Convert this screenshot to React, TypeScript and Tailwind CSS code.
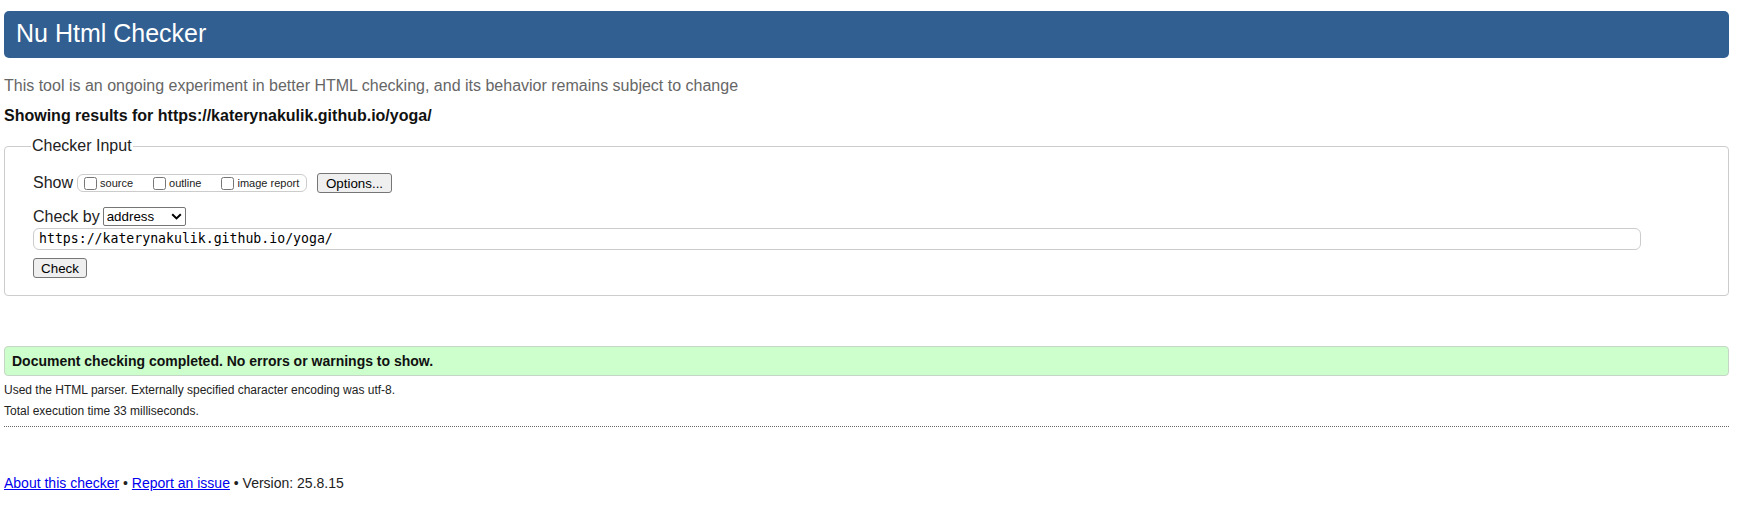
import React from 'react';

const Chevron: React.FC = () => (
  <svg width="11" height="7" viewBox="0 0 11 7" className="absolute right-[4px] top-[6px] pointer-events-none">
    <path d="M1.2 1.2 L5.5 5.4 L9.8 1.2" fill="none" stroke="#000" strokeWidth="2" />
  </svg>
);

const Box: React.FC<{ label: string }> = ({ label }) => (
  <label className="flex items-center whitespace-nowrap text-[11px] leading-[14px] text-[#222]">
    <input type="checkbox" className="w-[13px] h-[13px] m-0 mr-[3px]" />
    <span>{label}</span>
  </label>
);

const App: React.FC = () => {
  return (
    <div className="min-h-[519px] bg-white text-[#222] font-['Liberation_Sans',Arial,sans-serif]">
      <div className="ml-[4px] w-[1725px] pt-[11px]">
        {/* Title bar */}
        <h1 className="h-[47px] flex items-center pl-[12px] pb-[3px] rounded-[5px] bg-[#315f91] text-white text-[25px] leading-[30px] font-normal">
          Nu Html Checker
        </h1>

        <p className="mt-[18px] text-[16px] leading-[20px] text-[#666]">
          This tool is an ongoing experiment in better HTML checking, and its behavior remains subject to change
        </p>
        <p className="mt-[10px] text-[16px] leading-[20px] font-bold text-[#111]">
          Showing results for https://katerynakulik.github.io/yoga/
        </p>

        {/* Checker input */}
        <div className="relative mt-[20px] h-[150px] border border-[#cccccc] rounded-[4px] pl-[28px] pt-[26px]">
          <div className="absolute left-[26px] top-[-10px] bg-white px-[1px] text-[16px] leading-[18px] text-[#222]">
            Checker Input
          </div>

          <div className="flex items-center h-[20px]">
            <span className="text-[16px] mr-[4px]">Show</span>
            <div className="flex items-center h-[18px] w-[230px] border border-[#cccccc] rounded-[6px] pl-[6px]">
              <Box label="source" />
              <div className="w-[20px]" />
              <Box label="outline" />
              <div className="w-[20px]" />
              <Box label="image report" />
            </div>
            <button className="ml-[10px] h-[20px] w-[75px] text-[13.33px] bg-[#efefef] border border-[#767676] rounded-[3px] text-black">
              Options...
            </button>
          </div>

          <div className="flex items-center mt-[14px] h-[19px]">
            <span className="text-[16px] mr-[3px]">Check by</span>
            <div className="relative">
              <select className="appearance-none block h-[19px] w-[83px] border border-[#767676] rounded-[2px] pl-[3px] text-[13.33px] leading-[17px] text-black bg-white">
                <option>address</option>
              </select>
              <Chevron />
            </div>
          </div>

          <div className="mt-[2px] h-[22px] w-[1608px] flex items-center border border-[#cccccc] rounded-[6px] pl-[5px] font-['DejaVu_Sans_Mono',monospace] text-[13.2px] text-black">
            https://katerynakulik.github.io/yoga/
          </div>

          <button className="block mt-[8px] h-[20px] w-[54px] text-[13.33px] bg-[#efefef] border border-[#767676] rounded-[3px] text-black">
            Check
          </button>
        </div>

        {/* Result */}
        <div className="mt-[50px] h-[30px] flex items-center pl-[7px] bg-[#ccffcc] border border-[#c6d6c6] rounded-[4px] text-[14px] font-bold text-[#111]">
          Document checking completed. No errors or warnings to show.
        </div>

        <p className="mt-[3px] text-[12px] leading-[22px] text-[#222]">
          Used the HTML parser. Externally specified character encoding was utf-8.
        </p>
        <p className="text-[12px] leading-[21px] text-[#222]">Total execution time 33 milliseconds.</p>

        <hr className="mt-[4px] border-0 border-t border-dotted border-[#666]" />

        <p className="mt-[46px] text-[14px] leading-[20px] text-[#222]">
          <a href="#" className="text-[#0000ee] underline">About this checker</a>
          {' • '}
          <a href="#" className="text-[#0000ee] underline">Report an issue</a>
          {' • Version: 25.8.15'}
        </p>
      </div>
    </div>
  );
};

export default App;
